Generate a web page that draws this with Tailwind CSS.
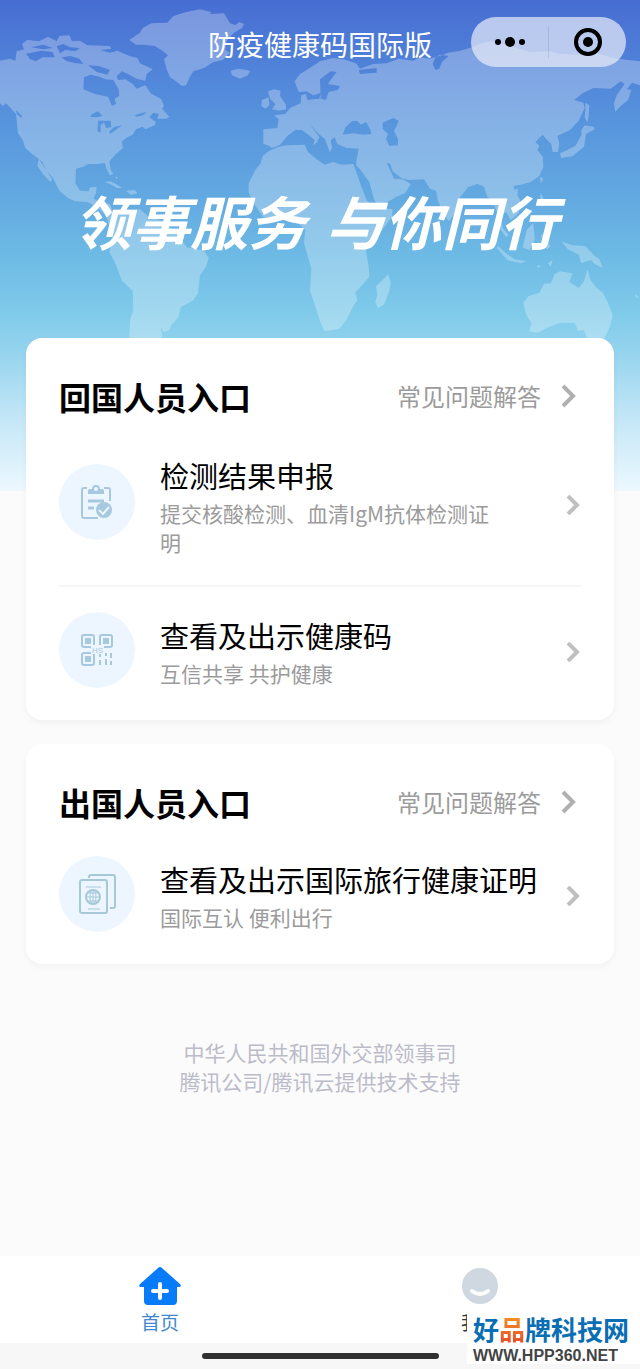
<!DOCTYPE html>
<html lang="zh-CN">
<head>
    <meta charset="UTF-8">
    <meta name="viewport" content="width=device-width, initial-scale=1.0">
    <title>防疫健康码国际版</title>
    <script src="https://cdn.jsdelivr.net/npm/@tailwindcss/browser@4"></script>
</head>
<body class="relative min-h-screen flex flex-col bg-[#fbfbfb] font-['Noto_Sans_CJK_SC',sans-serif] text-black">
    <!-- 顶部背景：渐变和世界地图 -->
    <div class="absolute inset-x-0 top-0 h-[491px] overflow-hidden bg-[linear-gradient(180deg,#476dd2_0%,#4f80d8_12%,#5896dd_26%,#61a6e0_38%,#6dbae5_52%,#80cbea_64%,#96d4ee_72%,#c3e6f7_85%,#ecf8fe_100%)]">
        <svg class="w-full opacity-[.27]" viewBox="0 0 1920 1473" fill="#fff" aria-hidden="true">
            <!-- 北美洲与南美洲 -->
            <path fill-rule="evenodd" d="M0 182L30 176L46 182L50 154L72 148L66 132L82 120L118 124L144 110L170 124L178 108L208 106L216 124L240 122L262 136L330 138L334 146L300 150L330 158L352 152L388 168L412 174L420 190L458 208L440 222L436 242L410 236L384 222L366 214L350 228L354 240L376 238L398 252L410 266L436 256L452 280L484 298L492 318L486 326L508 350L500 356L472 356L476 342L460 338L448 352L468 366L464 376L436 388L428 380L408 388L398 404L382 412L366 424L368 444L346 464L328 484L332 510L340 522L330 526L320 508L314 488L294 492L264 492L250 500L228 506L226 550L240 572L266 574L270 562L290 560L288 578L280 596L300 606L330 612L340 640L372 636L420 628L446 650L490 664L530 700L560 742L612 752L626 774L618 800L600 826L594 880L578 902L542 922L536 950L512 978L508 990L490 996L482 980L488 1020L470 1080L450 1110L420 1100L388 1020L390 960L400 930L398 872L366 842L346 790L328 756L338 720L320 650L290 620L262 606L226 604L204 594L178 572L160 536L140 512L116 476L92 458L76 444L68 420L54 400L48 342L30 322L18 310L8 318L0 310ZM252 232L272 224L298 230L316 238L340 240L356 268L358 288L344 296L348 312L336 318L324 290L284 282L250 268ZM276 342L294 334L308 348L288 352L270 350ZM294 362L332 362L334 382L318 384L312 368L302 374L302 398L292 394ZM328 394L344 380L366 376L344 392L330 402ZM404 346L428 338L440 336L428 346L410 350ZM48 330L66 348L64 354L50 342ZM116 478L126 484L140 512L156 538L152 546L132 526L112 498ZM76 162L124 152L158 156L164 172L128 172L108 184L90 178L84 168ZM94 142L130 134L158 144L130 148ZM170 138L190 132L210 142L240 144L226 154L196 150L180 160ZM184 172L212 168L238 176L250 192L228 190L200 184ZM264 196L296 198L330 210L322 224L290 216Z"/>
            <path d="M312 546L332 544L358 558L366 564L350 564L330 552ZM378 572L404 570L412 580L392 584ZM346 530L354 532L350 538Z"/>
            <!-- 格陵兰与冰岛 -->
            <path d="M388 120L420 98L428 84L454 70L502 68L520 48L560 36L600 28L634 36L630 42L672 40L690 70L706 76L718 66L732 72L726 84L702 98L680 122L676 150L690 158L668 180L640 186L612 204L580 214L570 230L558 256L546 258L528 244L510 232L500 208L492 178L504 166L484 150L464 138L430 134L408 134ZM692 212L716 206L750 212L744 226L720 236L696 226Z"/>
            <!-- 不列颠群岛 -->
            <path d="M804 274L822 268L842 272L840 288L858 314L858 328L838 332L816 328L826 312L810 296ZM786 300L806 292L808 316L796 326L784 318Z"/>
            <!-- 欧亚大陆 -->
            <path fill-rule="evenodd" d="M790 388L832 384L836 358L822 346L856 342L870 324L902 310L904 286L918 282L922 300L958 296L962 278L940 286L920 274L896 276L884 244L900 222L930 204L960 184L1000 174L1030 178L1068 190L1080 206L1120 192L1160 190L1196 176L1240 182L1260 172L1290 176L1330 164L1344 158L1380 152L1410 144L1440 132L1470 124L1500 128L1540 142L1590 156L1650 154L1680 162L1730 164L1790 160L1850 176L1920 184L1920 256L1896 248L1880 268L1894 270L1884 300L1862 318L1846 336L1842 310L1850 286L1874 252L1862 244L1832 266L1780 264L1750 278L1722 300L1750 308L1754 324L1736 362L1710 390L1672 408L1678 430L1674 456L1658 456L1654 432L1638 416L1628 404L1606 426L1618 438L1612 450L1628 470L1630 500L1618 528L1592 546L1562 554L1540 558L1546 576L1560 600L1556 640L1532 660L1520 638L1504 640L1508 684L1526 704L1518 712L1496 680L1490 634L1478 602L1462 590L1452 560L1432 552L1404 562L1380 592L1370 634L1346 664L1330 640L1314 602L1308 572L1290 566L1272 538L1226 540L1204 534L1178 514L1170 490L1160 490L1172 514L1182 536L1208 538L1232 552L1216 578L1190 590L1152 612L1130 612L1122 598L1108 546L1080 508L1068 496L1070 480L1076 446L1040 444L1012 432L1004 412L992 420L996 442L990 458L982 436L974 416L956 402L936 380L930 374L944 392L958 412L950 428L940 436L944 420L930 408L906 390L886 390L862 408L840 434L816 444L804 436L790 432ZM1028 404L1036 382L1056 364L1070 362L1084 374L1098 366L1112 390L1114 402L1088 404L1062 400ZM1148 368L1180 354L1196 362L1190 378L1182 392L1194 418L1194 436L1168 438L1158 418L1164 402L1148 386ZM960 238L992 214L1010 216L996 234L984 252L1020 258L1014 270L986 276L978 300L962 296ZM1076 210L1130 204L1130 218L1080 222ZM1298 192L1306 172L1320 164L1346 168L1326 186L1318 206L1306 210Z"/>
            <!-- 非洲 -->
            <path d="M808 452L836 440L860 436L914 434L924 456L948 476L974 494L1000 486L1024 494L1060 492L1070 518L1084 560L1100 600L1122 622L1178 628L1176 650L1144 694L1110 728L1098 752L1106 800L1108 830L1082 860L1066 876L1072 902L1062 914L1040 958L1018 986L974 994L962 970L946 918L930 872L934 806L912 728L916 690L888 662L828 656L790 652L764 614L746 578L746 550L766 510L782 490L788 468Z"/>
            <path d="M1164 822L1172 846L1168 872L1152 914L1134 924L1126 906L1132 884L1128 858L1146 842Z"/>
            <!-- 日本、东南亚与大洋洲 -->
            <path d="M1754 376L1780 380L1784 388L1758 402L1752 440L1718 468L1684 474L1680 460L1702 450L1726 438L1744 406L1744 390ZM1756 308L1768 316L1766 350L1762 368L1754 352L1756 330ZM1620 530L1630 536L1622 550ZM1542 570L1554 566L1552 586L1544 586ZM1622 580L1634 600L1626 622L1618 608ZM1646 660L1658 668L1648 680ZM1580 690L1600 668L1604 720L1588 750L1568 742ZM1494 738L1520 762L1544 778L1580 784L1562 790L1522 780L1490 744ZM1622 704L1650 700L1634 716L1652 740L1640 748L1630 728ZM1612 794L1622 798L1614 804ZM1644 790L1658 780L1652 800Z"/>
            <path d="M1684 724L1716 736L1756 738L1784 768L1798 778L1808 804L1784 792L1772 780L1744 790L1736 764L1704 748ZM1570 908L1586 888L1618 878L1632 852L1652 850L1664 822L1680 814L1718 820L1708 846L1736 864L1752 844L1762 808L1772 840L1788 862L1808 878L1824 908L1838 946L1832 974L1812 1018L1790 1034L1764 1022L1752 990L1734 992L1724 968L1680 968L1640 984L1614 998L1588 994L1594 970L1578 942ZM1904 882L1914 888L1912 896Z"/>
        </svg>
    </div>

    <!-- 导航栏 -->
    <header class="relative grid grid-cols-[1fr_auto_1fr] items-center h-[84px] px-[14px]">
        <h1 class="col-start-2 text-[28px] leading-10 text-white pt-1">防疫健康码国际版</h1>
        <div class="justify-self-end flex items-center w-[155px] h-[50px] rounded-full bg-[#e9edfa]/70">
            <button type="button" aria-label="更多" class="flex-1 flex justify-center">
                <svg class="w-8 h-3" viewBox="0 0 32 12" aria-hidden="true"><circle cx="4" cy="6" r="3"/><circle cx="16" cy="6" r="5"/><circle cx="28" cy="6" r="3"/></svg>
            </button>
            <span class="w-px h-8 bg-slate-500/20"></span>
            <button type="button" aria-label="关闭" class="flex-1 flex justify-center">
                <svg class="size-[30px]" viewBox="0 0 30 30" aria-hidden="true"><circle cx="15" cy="15" r="12" fill="none" stroke="#000" stroke-width="4"/><circle cx="15" cy="15" r="5"/></svg>
            </button>
        </div>
    </header>

    <main class="relative flex-1 px-[26px]">
        <p class="flex justify-center gap-5 pt-24 pr-2 h-[254px] text-[58px] leading-[80px] font-bold italic text-white whitespace-nowrap"><span>领事服务</span> <span>与你同行</span></p>

        <!-- 回国人员入口 -->
        <section class="rounded-[16px] bg-white shadow-[0_3px_6px_rgba(0,0,0,0.04)] px-[33px] pt-[34px] pb-8">
            <div class="flex items-center justify-between h-12">
                <h2 class="text-[32px] leading-12 font-bold">回国人员入口</h2>
                <a href="#" class="flex items-center gap-5 text-2xl text-[#9b9b9b]">常见问题解答
                    <svg class="w-4 h-6 mr-1" viewBox="0 0 16 24" fill="none" stroke="#b0b0b0" stroke-width="4" aria-hidden="true"><path d="M2 2L12 12L2 22"/></svg>
                </a>
            </div>
            <a href="#" class="flex items-center pt-[33px] pb-7 border-b-2 border-[#f5f5f5]">
                <span class="self-start mt-[11px] size-[76px] shrink-0 rounded-full bg-[#edf6fe] flex items-center justify-center">
                    <svg class="w-9 h-9" viewBox="0 0 36 36" fill="none" stroke="#a6c9e0" stroke-width="2" aria-hidden="true">
                        <path d="M8 4H5Q3 4 3 6V32Q3 34 5 34H19M25 4H29Q31 4 31 6V17"/>
                        <path fill="#a6c9e0" stroke="none" fill-rule="evenodd" d="M9 10V7Q9 5 11 5H13Q13 1 17 1Q21 1 21 5H23Q25 5 25 7V10ZM17 3A2 2 0 0 0 17 7A2 2 0 0 0 17 3Z"/>
                        <path stroke-width="3" d="M9 17H25M9 24H15"/>
                        <circle cx="25" cy="26" r="8" fill="#a6c9e0" stroke="none"/>
                        <path stroke="#edf6fe" d="M20 26L24 30L30 23"/>
                    </svg>
                </span>
                <span class="flex-1 pl-[25px] pr-[60px]">
                    <span class="block text-[29px] leading-[44px]">检测结果申报</span>
                    <span class="block text-[21px] leading-[29px] pt-[2px] text-[#9b9b9b]">提交核酸检测、血清IgM抗体检测证明</span>
                </span>
                <svg class="w-4 h-5 shrink-0" viewBox="0 0 16 20" fill="none" stroke="#c0c0c0" stroke-width="4" aria-hidden="true"><path d="M3 1L12 10L3 19"/></svg>
            </a>
            <a href="#" class="flex items-center pt-[25px]">
                <span class="size-[76px] shrink-0 rounded-full bg-[#edf6fe] flex items-center justify-center">
                    <svg class="size-8" viewBox="0 0 32 32" fill="none" stroke="#a6c9e0" stroke-width="2" aria-hidden="true">
                        <path d="M2 1H11Q13 1 13 3V11Q13 13 11 13H3Q1 13 1 11V3Q1 1 3 1M21 1H29Q31 1 31 3V11Q31 13 29 13H21Q19 13 19 11V3Q19 1 21 1M3 19H11Q13 19 13 21V29Q13 31 11 31H3Q1 31 1 29V21Q1 19 3 19"/>
                        <path fill="#a6c9e0" stroke="none" d="M4 4H10V10H4ZM22 4H28V10H22ZM4 22H10V28H4Z"/>
                        <path d="M19 20V23M19 26V31M25 19V22M25 25V31M30 19V24M30 27V31"/>
                        <rect x="10" y="11" width="13" height="9" fill="#edf6fe" stroke="none"/>
                        <text x="11" y="19" font-size="8" font-family="Liberation Sans" fill="#a6c9e0" stroke="none">HS</text>
                    </svg>
                </span>
                <span class="flex-1 pl-[25px]">
                    <span class="block text-[29px] leading-[44px]">查看及出示健康码</span>
                    <span class="block text-[21px] leading-[29px] pt-[2px] text-[#9b9b9b]">互信共享 共护健康</span>
                </span>
                <svg class="w-4 h-5 mt-1 shrink-0" viewBox="0 0 16 20" fill="none" stroke="#c0c0c0" stroke-width="4" aria-hidden="true"><path d="M3 1L12 10L3 19"/></svg>
            </a>
        </section>

        <!-- 出国人员入口 -->
        <section class="mt-6 rounded-[16px] bg-white shadow-[0_3px_6px_rgba(0,0,0,0.04)] px-[33px] pt-[34px] pb-8">
            <div class="flex items-center justify-between h-12">
                <h2 class="text-[32px] leading-12 font-bold">出国人员入口</h2>
                <a href="#" class="flex items-center gap-5 text-2xl text-[#9b9b9b]">常见问题解答
                    <svg class="w-4 h-6 mr-1" viewBox="0 0 16 24" fill="none" stroke="#b0b0b0" stroke-width="4" aria-hidden="true"><path d="M2 2L12 12L2 22"/></svg>
                </a>
            </div>
            <a href="#" class="flex items-center pt-[30px]">
                <span class="size-[76px] shrink-0 rounded-full bg-[#edf6fe] flex items-center justify-center">
                    <svg class="w-[38px] h-10" viewBox="0 0 38 40" fill="none" stroke="#a6c9da" stroke-width="2" aria-hidden="true">
                        <rect x="2" y="6" width="27" height="33" rx="2"/>
                        <path d="M11 4V3Q11 1 13 1H35Q37 1 37 3V32Q37 34 35 34H32"/>
                        <path stroke-width="1" d="M8 13H23M10 35H22"/>
                        <circle cx="15" cy="23" r="7"/>
                        <ellipse cx="15" cy="23" rx="3" ry="7" stroke-width="1"/>
                        <path stroke-width="1" d="M8 23H22M10 19H20M10 27H20M15 16V30"/>
                    </svg>
                </span>
                <span class="flex-1 pl-[25px] whitespace-nowrap">
                    <span class="block text-[29px] leading-[44px]">查看及出示国际旅行健康证明</span>
                    <span class="block text-[21px] leading-[29px] pt-[2px] text-[#9b9b9b]">国际互认 便利出行</span>
                </span>
                <svg class="w-4 h-5 mt-1 shrink-0" viewBox="0 0 16 20" fill="none" stroke="#c0c0c0" stroke-width="4" aria-hidden="true"><path d="M3 1L12 10L3 19"/></svg>
            </a>
        </section>

        <footer class="pt-[74px] pb-10 text-center text-[21px] leading-[29px] text-[#bbbbca]">
            <p>中华人民共和国外交部领事司</p>
            <p>腾讯公司/腾讯云提供技术支持</p>
        </footer>
    </main>

    <!-- 底部标签栏 -->
    <nav class="relative grid grid-cols-2 h-[87px] bg-white text-[19px] leading-7">
        <a href="#" class="flex flex-col items-center pt-[10px] text-[#4187cd]">
            <svg class="w-11 h-10" viewBox="0 0 44 40" aria-hidden="true">
                <path fill="#087bf8" d="M20 2Q22 0 24 2L42 18Q44 21 41 21H39V35Q39 39 35 39H10Q6 39 6 35V21H3Q0 21 2 18Z"/>
                <path stroke="#fff" stroke-width="4" stroke-linecap="round" d="M22 18V32M15 25H29"/>
            </svg>
            <span class="pt-[2px]">首页</span>
        </a>
        <a href="#" class="flex flex-col items-center pt-[10px] text-[#33363d]">
            <svg class="w-10 h-10" viewBox="0 0 40 40" fill="none" aria-hidden="true">
                <circle cx="20" cy="20" r="18" fill="#cfd8e1"/>
                <path stroke="#fff" stroke-width="4" stroke-linecap="round" d="M12 25Q20 31 28 25"/>
            </svg>
            <span class="pt-[2px]">我的</span>
        </a>
    </nav>
    <div class="relative flex justify-center h-[26px] pt-[10px] bg-[#f7f7f7]">
        <span class="w-[237px] h-[6px] rounded-full bg-[#303030]"></span>
    </div>

    <!-- 站点水印 -->
    <div class="absolute right-0 bottom-[5px] w-[173px] h-[54px] bg-white pl-[6px] whitespace-nowrap">
        <p class="text-[26px] leading-[38px] font-bold text-[#0a6eb4]">好<span class="bg-linear-to-b from-[#f5a01e] to-[#e0402a] bg-clip-text text-transparent">品</span>牌科技网</p>
        <p class="font-['Liberation_Sans',sans-serif] text-[16px] leading-4 font-bold text-[#444]">WWW.HPP360.NET</p>
    </div>
</body>
</html>
